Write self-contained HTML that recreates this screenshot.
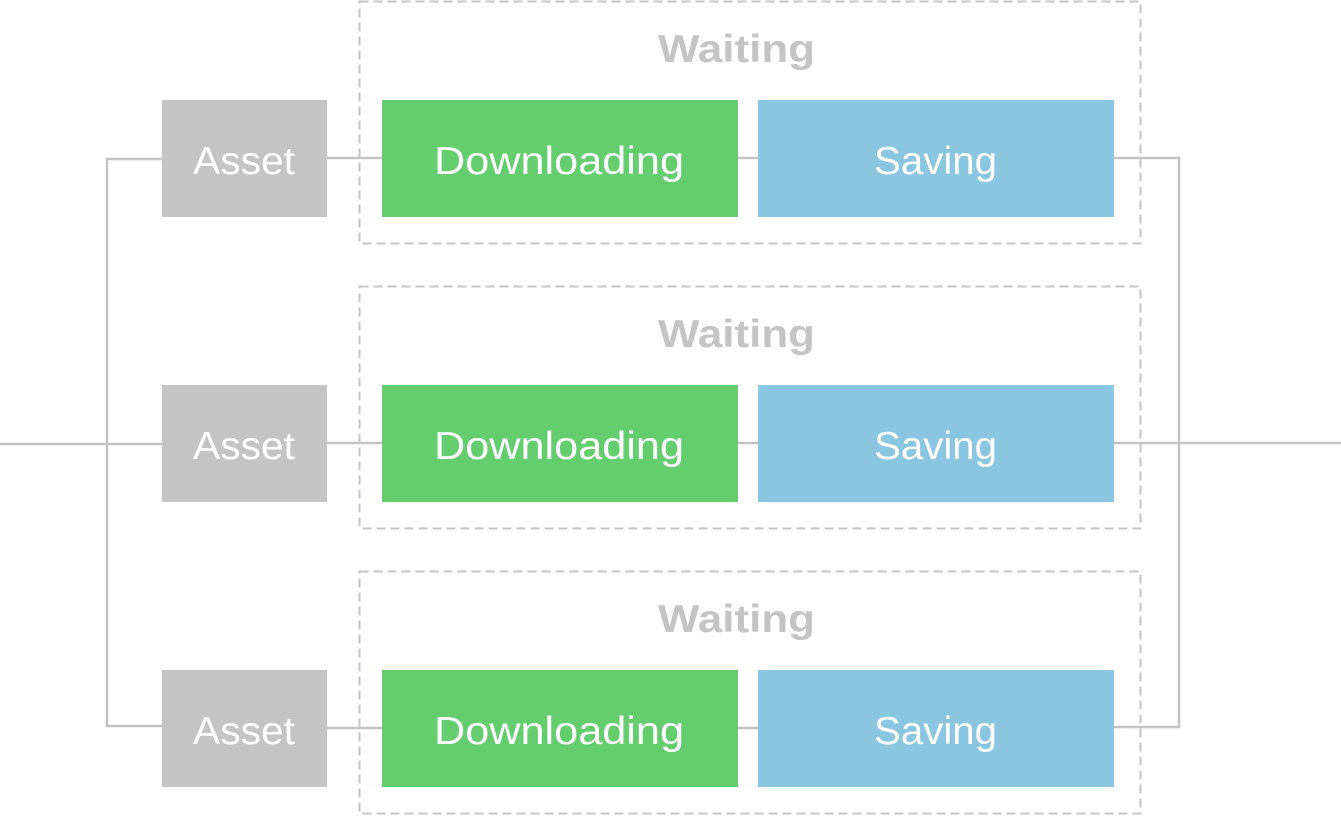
<!DOCTYPE html>
<html><head><style>html,body{margin:0;padding:0;background:#fff;overflow:hidden}</style></head>
<body>
<svg width="1341" height="816" xmlns="http://www.w3.org/2000/svg" font-family="'Liberation Sans', sans-serif">
<g stroke="#c4c4c4" stroke-width="2.5" fill="none">
<path d="M162 159H107V726H162"/>
<path d="M0 444H162"/>
<path d="M1114 158H1179V727H1114"/>
<path d="M1114 443H1341"/>
</g>
<g id="r">
<rect x="359.5" y="1.5" width="781" height="242" fill="none" stroke="#c4c4c4" stroke-width="2" stroke-dasharray="9 5"/>
<line x1="327" y1="158" x2="382" y2="158" stroke="#c4c4c4" stroke-width="2.5"/>
<line x1="738" y1="158" x2="758" y2="158" stroke="#c4c4c4" stroke-width="2.5"/>
<rect x="162" y="100" width="165" height="117" fill="#c4c4c4"/>
<rect x="382" y="100" width="356" height="117" fill="#64cd6e"/>
<rect x="758" y="100" width="356" height="117" fill="#8ac6e0"/>
<text x="658" y="62" textLength="157" lengthAdjust="spacingAndGlyphs" font-size="39" font-weight="bold" fill="#c4c4c4">Waiting</text>
<text x="193" y="174" textLength="102" lengthAdjust="spacingAndGlyphs" font-size="39" fill="#fff">Asset</text>
<text x="434" y="174" textLength="250" lengthAdjust="spacingAndGlyphs" font-size="39" fill="#fff">Downloading</text>
<text x="874" y="174" textLength="123" lengthAdjust="spacingAndGlyphs" font-size="39" fill="#fff">Saving</text>
</g>
<use href="#r" y="285"/>
<use href="#r" y="570"/>
</svg>
</body></html>
